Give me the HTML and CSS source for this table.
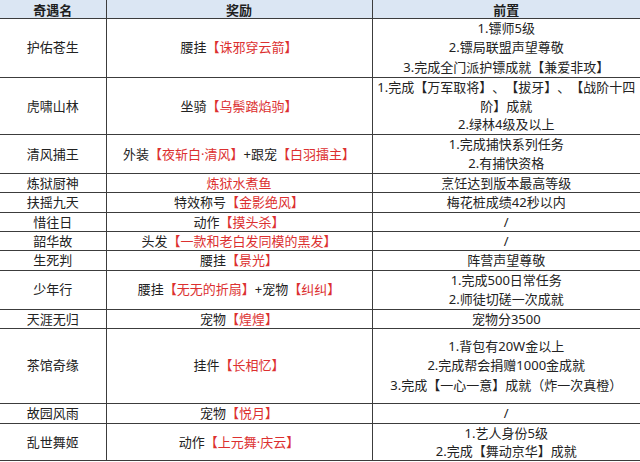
FILE: index.html
```html
<!DOCTYPE html>
<html lang="zh-CN">
<head>
<meta charset="utf-8">
<link rel="stylesheet" href="styles.css">
</head>
<body>
<table class="grid">
  <colgroup>
    <col class="c1">
    <col class="c2">
    <col class="c3">
  </colgroup>
  <thead>
    <tr class="head"><th>奇遇名</th><th>奖励</th><th>前置</th></tr>
  </thead>
  <tbody>
    <tr class="r3"><td>护佑苍生</td><td>腰挂<span class="red">【诛邪穿云箭】</span></td><td>1.镖师5级<br>2.镖局联盟声望尊敬<br>3.完成全门派护镖成就【兼爱非攻】</td></tr>
    <tr class="r3b"><td>虎啸山林</td><td>坐骑<span class="red">【乌鬃踏焰驹】</span></td><td>1.完成【万军取将】、【拔牙】、【战阶十四<br>阶】成就<br>2.绿林4级及以上</td></tr>
    <tr class="r2"><td>清风捕王</td><td>外装<span class="red">【夜斩白·清风】</span>+跟宠<span class="red">【白羽擂主】</span></td><td>1.完成捕快系列任务<br>2.有捕快资格</td></tr>
    <tr class="r1"><td>炼狱厨神</td><td><span class="red">炼狱水煮鱼</span></td><td>烹饪达到版本最高等级</td></tr>
    <tr class="r1"><td>扶摇九天</td><td>特效称号<span class="red">【金影绝风】</span></td><td>梅花桩成绩42秒以内</td></tr>
    <tr class="r1"><td>惜往日</td><td>动作<span class="red">【摸头杀】</span></td><td>/</td></tr>
    <tr class="r1"><td>韶华故</td><td>头发<span class="red">【一款和老白发同模的黑发】</span></td><td>/</td></tr>
    <tr class="r1"><td>生死判</td><td>腰挂<span class="red">【景光】</span></td><td>阵营声望尊敬</td></tr>
    <tr class="r2"><td>少年行</td><td>腰挂<span class="red">【无无的折扇】</span>+宠物<span class="red">【纠纠】</span></td><td>1.完成500日常任务<br>2.师徒切磋一次成就</td></tr>
    <tr class="r1"><td>天涯无归</td><td>宠物<span class="red">【煌煌】</span></td><td>宠物分3500</td></tr>
    <tr class="r3c"><td>茶馆奇缘</td><td>挂件<span class="red">【长相忆】</span></td><td>1.背包有20W金以上<br>2.完成帮会捐赠1000金成就<br>3.完成【一心一意】成就（炸一次真橙）</td></tr>
    <tr class="r1"><td>故园风雨</td><td>宠物<span class="red">【悦月】</span></td><td>/</td></tr>
    <tr class="r2b"><td>乱世舞姬</td><td>动作<span class="red">【上元舞·庆云】</span></td><td>1.艺人身份5级<br>2.完成【舞动京华】成就</td></tr>
  </tbody>
</table>
</body>
</html>
```

FILE: styles.css
```css
html, body {
  margin: 0;
  padding: 0;
  background: #ffffff;
}

body {
  font-family: "Noto Sans", "Noto Sans CJK SC", sans-serif;
  font-size: 13px;
  color: #222222;
  text-spacing-trim: space-all;
}

.grid {
  width: 640px;
  table-layout: fixed;
  border-collapse: collapse;
  border-top: hidden;
  border-left: hidden;
  border-right: hidden;
}

.c1 { width: 106px; }
.c2 { width: 266px; }
.c3 { width: 268px; }

.grid th,
.grid td {
  border: 1px solid #3c3c3c;
  padding: 0;
  text-align: center;
  vertical-align: middle;
  line-height: 18.3px;
  white-space: nowrap;
}

.head th {
  background: #dbe6f3;
  font-weight: bold;
  color: #1e1e1e;
  line-height: 16px;
  padding-top: 1.5px;
}

.red {
  color: #dc3030;
}

.r3 td { line-height: 19.5px; }
.r3b td { line-height: 18.7px; }
.r2 td { line-height: 19px; }
.r2b td { line-height: 18px; }
.r3c td { line-height: 19.5px; padding: 8px 0; }
```
